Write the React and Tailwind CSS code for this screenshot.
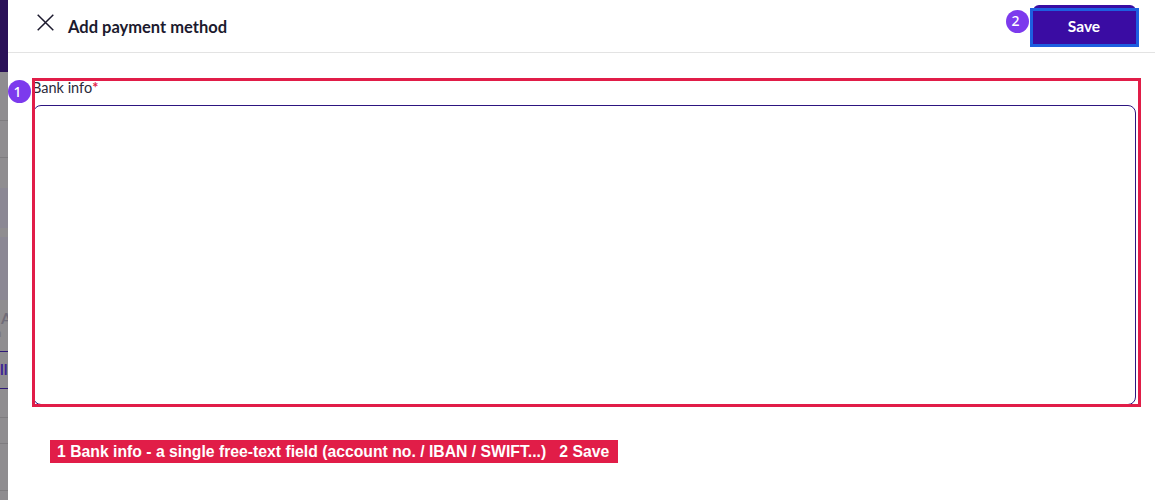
import React from "react";

const StripRow = ({ className, children }) => <div className={className}>{children}</div>;

const LeftStrip = () => (
	<div className="w-2 h-[500px] shrink-0 flex flex-col overflow-hidden bg-[#8f8d90] whitespace-nowrap">
		<StripRow className="h-[72px] shrink-0 bg-[#2a1158]" />
		<StripRow className="h-[49px] shrink-0 border-b border-[#7f7d80]" />
		<StripRow className="h-[37px] shrink-0 border-b border-[#7f7d80]" />
		<StripRow className="h-[30px] shrink-0" />
		<StripRow className="h-[40px] shrink-0 bg-[#8b8894]" />
		<StripRow className="h-[9px] shrink-0" />
		<StripRow className="h-[63px] shrink-0 bg-[#8b8894]" />
		<StripRow className="h-[52px] shrink-0 border-b border-[#2f1a78] pt-[9px] pl-px text-[15px] leading-[18px] font-bold text-[#6f6c78]">
			A
			<div className="-ml-3 text-[11px] leading-3 font-normal text-[#77757b]">on</div>
		</StripRow>
		<StripRow className="h-[37px] shrink-0 border-b border-[#2f1a78] pt-[7px] text-[15px] leading-5 font-bold text-[#3b2296]">
			lli
		</StripRow>
		<StripRow className="h-[29px] shrink-0 border-b border-[#7f7d80]" />
		<StripRow className="h-[26px] shrink-0 border-b border-[#7f7d80]" />
		<StripRow className="h-[47px] shrink-0 border-b border-[#7f7d80]" />
	</div>
);

const Badge = ({ n, className }) => (
	<span className={`absolute flex items-center justify-center w-[23px] h-[23px] rounded-full bg-[#7c3aed] text-white text-[14px] font-medium font-['Noto_Sans',sans-serif] ${className}`}>
		{n}
	</span>
);

export default function App() {
	return (
		<div className="relative flex w-[1155px] h-[500px] overflow-hidden bg-white font-['Lato',sans-serif]">
			<LeftStrip />
			<div className="flex-1 flex flex-col">
				<header className="h-[53px] flex items-center justify-between border-b border-[#e3e3e3] pl-[29px] pr-[19px]">
					<div className="flex items-center gap-[14px]">
						<svg width="17" height="17" viewBox="0 0 17 17" fill="none" stroke="#1c1a2e" strokeWidth="1.5" className="-mt-2">
							<path d="M.7.7l15.6 15.6M16.3.7L.7 16.3" />
						</svg>
						<h1 className="text-[16.5px] font-bold mt-0.5 text-[#1c1a2e]">Add payment method</h1>
					</div>
					<button className="w-[103px] h-[41px] mb-px pt-[3px] pr-px rounded-t-md bg-[#3a0ca3] text-white text-[15.5px] font-bold">Save</button>
				</header>
				<div className="pl-[25px] pr-[19px] pt-[26px]">
					<label className="block -ml-px text-[14.5px] leading-[17px] text-[#2b2a3a]">
						Bank info<span className="text-[#e11d48] font-bold">*</span>
					</label>
					<textarea className="block w-full h-[300px] mt-[9px] rounded-lg border border-[#2d1580] resize-none outline-none" />
				</div>
				<div className="pl-[42px] mt-[34px]">
					<span className="inline-block h-[23px] leading-[23px] pl-[7px] pr-[9px] bg-[#e11d48] text-white text-[15.75px] font-bold font-['Liberation_Sans',sans-serif] whitespace-pre">
						1 Bank info - a single free-text field (account no. / IBAN / SWIFT...)   2 Save
					</span>
				</div>
			</div>
			<div className="absolute left-8 top-[78px] w-[1109px] h-[329px] border-[3px] border-[#e11d48] pointer-events-none" />
			<div className="absolute left-[1030px] top-2 w-[109px] h-[39px] border-[3px] border-[#1d5fe0] pointer-events-none" />
			<Badge n="1" className="left-[8px] top-[80px] pr-1" />
			<Badge n="2" className="left-[1006px] top-[10px] pb-0.5 pr-1" />
		</div>
	);
}
